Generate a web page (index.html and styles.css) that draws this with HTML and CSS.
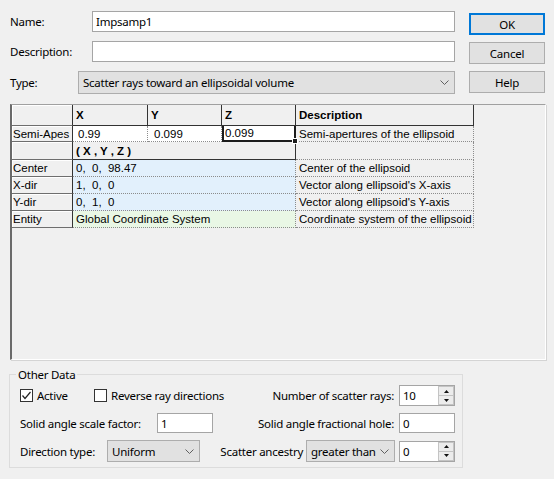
FILE: index.html
```html
<!DOCTYPE html>
<html lang="en">

<head>
  <meta charset="UTF-8">
  <meta name="viewport" content="width=device-width, initial-scale=1.0">
  <title>Importance Sampling Target</title>
  <link rel="stylesheet" href="styles.css">
</head>

<body>
  <div class="dialog">

    <!-- Name / description / type fields with the dialog buttons -->
    <div class="top">
      <div class="fields">
        <div class="field-row">
          <label class="field-label" for="name">Name:</label>
          <input class="textbox" id="name" type="text" value="Impsamp1">
        </div>
        <div class="field-row">
          <label class="field-label" for="desc">Description:</label>
          <input class="textbox" id="desc" type="text" value="">
        </div>
        <div class="field-row type-row">
          <span class="field-label">Type:</span>
          <div class="combo">
            <span>Scatter rays toward an ellipsoidal volume</span>
            <svg class="chevron" width="9" height="5" viewBox="0 0 9 5"><polyline points="0.5,0.5 4.5,4.5 8.5,0.5" /></svg>
          </div>
        </div>
      </div>

      <div class="buttons">
        <button class="btn btn-default">OK</button>
        <button class="btn">Cancel</button>
        <button class="btn">Help</button>
      </div>
    </div>

    <!-- Parameter spreadsheet -->
    <div class="sheet">
      <div class="cells">
        <div class="cell rowhead"></div>
        <div class="cell head">X</div>
        <div class="cell head">Y</div>
        <div class="cell head">Z</div>
        <div class="cell head">Description</div>

        <div class="cell rowhead">Semi-Apes</div>
        <div class="cell data white pad-x">0.99</div>
        <div class="cell data white pad-y">0.099</div>
        <div class="cell data white selected">0.099</div>
        <div class="cell data">Semi-apertures of the ellipsoid</div>

        <div class="cell rowhead"></div>
        <div class="cell head span-xyz">( X , Y , Z )</div>
        <div class="cell data"></div>

        <div class="cell rowhead">Center</div>
        <div class="cell data blue span-xyz">0,&nbsp; 0,&nbsp; 98.47</div>
        <div class="cell data">Center of the ellipsoid</div>

        <div class="cell rowhead">X-dir</div>
        <div class="cell data blue span-xyz">1,&nbsp; 0,&nbsp; 0</div>
        <div class="cell data">Vector along ellipsoid's X-axis</div>

        <div class="cell rowhead">Y-dir</div>
        <div class="cell data blue span-xyz">0,&nbsp; 1,&nbsp; 0</div>
        <div class="cell data">Vector along ellipsoid's Y-axis</div>

        <div class="cell rowhead">Entity</div>
        <div class="cell data green span-xyz">Global Coordinate System</div>
        <div class="cell data">Coordinate system of the ellipsoid</div>
      </div>
    </div>

    <!-- Other Data group -->
    <fieldset class="group">
      <legend>Other Data</legend>

      <div class="group-row">
        <div class="left">
          <label class="check check-active">
            <span class="box">
              <svg width="11" height="11" viewBox="0 0 11 11"><polyline points="1.5,5.5 4,8.5 9.5,2" /></svg>
            </span>
            Active
          </label>
          <label class="check">
            <span class="box"></span>
            Reverse ray directions
          </label>
        </div>
        <div class="right">
          <span>Number of scatter rays:</span>
          <div class="spin">
            <span class="spin-value">10</span>
            <span class="spin-buttons">
              <span class="spin-btn"><svg width="5" height="3" viewBox="0 0 5 3"><polygon points="2.5,0 5,3 0,3" /></svg></span>
              <span class="spin-btn"><svg width="5" height="3" viewBox="0 0 5 3"><polygon points="0,0 5,0 2.5,3" /></svg></span>
            </span>
          </div>
        </div>
      </div>

      <div class="group-row">
        <div class="left">
          <span class="scale-label">Solid angle scale factor:</span>
          <input class="textbox small" type="text" value="1">
        </div>
        <div class="right">
          <span>Solid angle fractional hole:</span>
          <input class="textbox small" type="text" value="0">
        </div>
      </div>

      <div class="group-row">
        <div class="left">
          <span class="dir-label">Direction type:</span>
          <div class="combo combo-uniform">
            <span>Uniform</span>
            <svg class="chevron" width="9" height="5" viewBox="0 0 9 5"><polyline points="0.5,0.5 4.5,4.5 8.5,0.5" /></svg>
          </div>
        </div>
        <div class="right">
          <span>Scatter ancestry</span>
          <div class="combo combo-ancestry">
            <span>greater than</span>
            <svg class="chevron" width="9" height="5" viewBox="0 0 9 5"><polyline points="0.5,0.5 4.5,4.5 8.5,0.5" /></svg>
          </div>
          <div class="spin">
            <span class="spin-value">0</span>
            <span class="spin-buttons">
              <span class="spin-btn"><svg width="5" height="3" viewBox="0 0 5 3"><polygon points="2.5,0 5,3 0,3" /></svg></span>
              <span class="spin-btn"><svg width="5" height="3" viewBox="0 0 5 3"><polygon points="0,0 5,0 2.5,3" /></svg></span>
            </span>
          </div>
        </div>
      </div>
    </fieldset>

  </div>
</body>

</html>
```

FILE: styles.css
```css
/* Base */
body {
  margin: 0;
  background: #f0f0f0;
  color: #000;
  font-family: 'Segoe UI', 'Noto Sans', sans-serif;
  font-size: 11.5px;
  letter-spacing: -0.25px;
}

.dialog {
  width: 554px;
  height: 479px;
  white-space: nowrap;
}

/* Top fields */
.top {
  display: flex;
  padding: 11px 0 0 10px;
}

.fields {
  width: 445px;
  display: flex;
  flex-direction: column;
  gap: 9px;
}

.field-row {
  display: flex;
  align-items: center;
  height: 21px;
}

.field-row.type-row {
  height: 23px;
}

.field-label {
  width: 82px;
  flex-shrink: 0;
}

.type-row .field-label {
  width: 68px;
}

.textbox {
  flex: 1;
  min-width: 0;
  height: 21px;
  margin: 0;
  padding: 0 3px;
  box-sizing: border-box;
  border: 1px solid #a5a5a5;
  border-radius: 0;
  background: #fff;
  font: inherit;
  letter-spacing: inherit;
  color: #000;
  outline: none;
}

.textbox.small {
  flex: none;
  width: 56px;
  height: 20px;
}

.combo {
  flex: 1;
  height: 100%;
  display: flex;
  align-items: center;
  justify-content: space-between;
  box-sizing: border-box;
  padding: 0 5px 0 4px;
  border: 1px solid #adadad;
  background: #e1e1e1;
}

.chevron polyline {
  fill: none;
  stroke: #606060;
  stroke-width: 1;
}

/* Dialog buttons */
.buttons {
  width: 76px;
  margin-left: 14px;
  padding-top: 2px;
  display: flex;
  flex-direction: column;
  gap: 7px;
}

.btn {
  height: 22px;
  margin: 0;
  padding: 0;
  box-sizing: border-box;
  border: 1px solid #adadad;
  background: #e1e1e1;
  font: inherit;
  letter-spacing: inherit;
  color: #000;
}

.btn-default {
  border-color: #0078d7;
  box-shadow: inset 0 0 0 1px #0078d7;
}

/* Spreadsheet */
.sheet {
  width: 536px;
  height: 256px;
  margin: 10px 0 0 10px;
  box-sizing: border-box;
  border-left: 2px solid #6a6a6a;
  border-top: 1px solid #a0a0a0;
  border-right: 1px solid #fff;
  border-bottom: 1px solid #fff;
  box-shadow: 1px 1px 0 #d4d4d4;
  font-family: 'Liberation Sans', Arial, sans-serif;
  font-size: 11.5px;
  letter-spacing: 0;
}

.cells {
  display: grid;
  grid-template-columns: 61px 75px 74px 74px 178px;
  grid-template-rows: 21px 16px 18px 17px 17px 17px 17px;
}

.cell {
  display: flex;
  align-items: center;
  box-sizing: border-box;
  padding-left: 3px;
  white-space: nowrap;
  overflow: hidden;
}

.cell.head {
  font-weight: bold;
  border-right: 1px solid #333;
  border-bottom: 1px solid #333;
}

.cell.rowhead {
  padding-left: 1px;
  border-right: 1px solid #333;
  border-bottom: 1px solid #6e6e6e;
  box-shadow: inset 1px 1px 0 #fff;
}

.cell.data {
  border-right: 1px dotted #8c8c8c;
  border-bottom: 1px dotted #8c8c8c;
}

.cell.white {
  background: #fff;
}

.cell.blue {
  background: #e2f0fc;
}

.cell.green {
  background: #e9f7e5;
}

.cell.pad-x {
  padding-left: 5px;
}

.cell.pad-y {
  padding-left: 6px;
}

.cell.selected {
  position: relative;
  overflow: visible;
  padding-left: 1px;
  border: 2px solid #1c1c1c;
  border-top: none;
}

/* fill handle on the active cell */
.cell.selected::after {
  content: '';
  position: absolute;
  right: -4px;
  bottom: -4px;
  width: 4px;
  height: 4px;
  background: #1c1c1c;
  border: 1px solid #fff;
}

.span-xyz {
  grid-column: 2 / 5;
}

/* Other Data group */
.group {
  width: 454px;
  margin: 7px 0 0 9px;
  padding: 0 7px 5px 10px;
  box-sizing: border-box;
  border: 1px solid #dcdcdc;
  display: flex;
  flex-direction: column;
  gap: 6px;
}

.group legend {
  margin-left: -4px;
  padding: 0 2px;
}

.group-row {
  display: flex;
  align-items: center;
  justify-content: space-between;
  height: 22px;
}

.group-row:first-of-type {
  margin-top: 3px;
  height: 21px;
}

.left,
.right {
  display: flex;
  align-items: center;
  height: 100%;
}

.right {
  gap: 5px;
}

.check {
  display: flex;
  align-items: center;
  gap: 4px;
}

.check-active {
  width: 74px;
}

.box {
  width: 13px;
  height: 13px;
  box-sizing: border-box;
  border: 1px solid #333;
  background: #fff;
  display: flex;
  align-items: center;
  justify-content: center;
}

.box polyline {
  fill: none;
  stroke: #222;
  stroke-width: 1.2;
}

.scale-label {
  width: 137px;
}

.dir-label {
  width: 87px;
}

.combo-uniform {
  flex: none;
  width: 93px;
}

.combo-ancestry {
  flex: none;
  width: 89px;
  margin-left: -2px;
  margin-right: -1px;
}

.spin {
  width: 56px;
  height: 21px;
  display: flex;
  box-sizing: border-box;
  border: 1px solid #a5a5a5;
  background: #fff;
}

.spin-value {
  flex: 1;
  padding-left: 3px;
  line-height: 19px;
}

.spin-buttons {
  width: 16px;
  display: flex;
  flex-direction: column;
}

.spin-btn {
  flex: 1;
  display: flex;
  align-items: center;
  justify-content: center;
  box-sizing: border-box;
  border: 1px solid #c4c4c4;
  background: #ececec;
}

.spin-btn + .spin-btn {
  border-top: none;
}

.spin-btn polygon {
  fill: #111;
}
```
